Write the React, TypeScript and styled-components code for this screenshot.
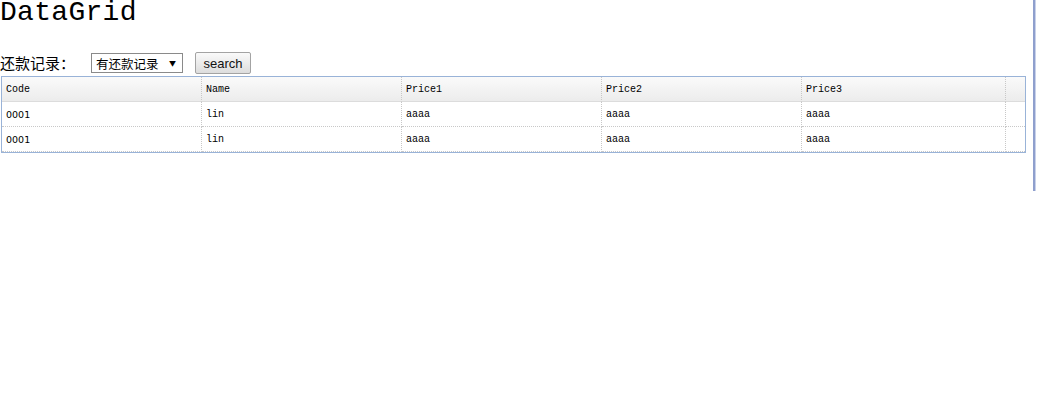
import styled, { createGlobalStyle } from "styled-components";

const GlobalStyle = createGlobalStyle`
  body {
    margin: 0;
    background: #ffffff;
    font-family: "Liberation Sans", "Noto Sans CJK SC", sans-serif;
  }
`;

interface Row {
  code: string;
  name: string;
  price1: string;
  price2: string;
  price3: string;
}

const columns = [
  { key: "code", title: "Code", width: 200 },
  { key: "name", title: "Name", width: 200 },
  { key: "price1", title: "Price1", width: 200 },
  { key: "price2", title: "Price2", width: 200 },
  { key: "price3", title: "Price3", width: 204 },
] as const;

const rows: Row[] = [
  { code: "0001", name: "lin", price1: "aaaa", price2: "aaaa", price3: "aaaa" },
  { code: "0001", name: "lin", price1: "aaaa", price2: "aaaa", price3: "aaaa" },
];

export default function App() {
  return (
    <>
      <GlobalStyle />
      <Page>
        <Title>DataGrid</Title>
        <Toolbar>
          <Label>还款记录：</Label>
          <Dropdown>
            <span>有还款记录</span>
            <Arrow>▼</Arrow>
          </Dropdown>
          <SearchButton>search</SearchButton>
        </Toolbar>
        <Grid>
          <colgroup>
            {columns.map((c) => (
              <col key={c.key} style={{ width: c.width }} />
            ))}
            <col style={{ width: 19 }} />
          </colgroup>
          <thead>
            <tr>
              {columns.map((c) => (
                <HeadCell key={c.key}>{c.title}</HeadCell>
              ))}
              <HeadCell $filler />
            </tr>
          </thead>
          <tbody>
            {rows.map((row, i) => (
              <tr key={i}>
                {columns.map((c) => (
                  <Cell key={c.key} $sans={c.key === "code"}>
                    {row[c.key]}
                  </Cell>
                ))}
                <Cell $filler />
              </tr>
            ))}
          </tbody>
        </Grid>
      </Page>
    </>
  );
}

const Page = styled.div`
  width: 1033px;
  height: 191px;
  border-right: 2px solid #8f9fcd;
  box-shadow: 1px 0 0 #c9d2ea;
`;

const Title = styled.h1`
  margin: 0;
  font-family: "Liberation Mono", "DejaVu Sans Mono", monospace;
  font-size: 28px;
  letter-spacing: 0.3px;
  font-weight: normal;
  line-height: 26px;
  color: #000;
`;

const Toolbar = styled.div`
  display: flex;
  align-items: center;
  height: 22px;
  margin-top: 26px;
`;

const Label = styled.span`
  font-family: "Noto Sans CJK SC", sans-serif;
  font-size: 15px;
  line-height: 20px;
  width: 91px;
  color: #000;
`;

const Dropdown = styled.div`
  box-sizing: border-box;
  width: 92px;
  height: 20px;
  border: 1px solid #8a8a8a;
  display: flex;
  align-items: center;
  justify-content: space-between;
  padding: 0 6px 0 4px;
  font-family: "Noto Sans CJK SC", sans-serif;
  font-size: 12.5px;
  color: #000;
  background: #fff;
`;

const Arrow = styled.span`
  font-size: 7px;
  line-height: 1;
`;

const SearchButton = styled.button`
  box-sizing: border-box;
  margin-left: 12px;
  width: 56px;
  height: 22px;
  padding: 0;
  border: 1px solid #a3a3a3;
  border-radius: 2px;
  background: linear-gradient(#fafafa, #dddddd);
  font-family: "Liberation Sans", sans-serif;
  font-size: 13px;
  color: #111;
`;

const Grid = styled.table`
  margin: 2px 0 0 1px;
  width: 1025px;
  table-layout: fixed;
  border-collapse: separate;
  border-spacing: 0;
  border: 1px solid #99b3d8;
`;

const HeadCell = styled.th<{ $filler?: boolean }>`
  box-sizing: border-box;
  height: 25px;
  padding: 0 0 0 4px;
  text-align: left;
  font-weight: normal;
  font-family: "Liberation Mono", monospace;
  font-size: 10px;
  color: #000;
  background: linear-gradient(#fafafa, #ececec);
  border-bottom: 1px solid #dcdcdc;
  border-right: ${(p) => (p.$filler ? "none" : "1px dotted #c8c8c8")};
`;

const Cell = styled.td<{ $filler?: boolean; $sans?: boolean }>`
  box-sizing: border-box;
  height: 25px;
  padding: 0 0 0 4px;
  font-family: ${(p) => (p.$sans ? '"DejaVu Sans", sans-serif' : '"Liberation Mono", monospace')};
  font-size: ${(p) => (p.$sans ? "9.5px" : "10px")};
  color: #000;
  border-bottom: 1px dotted #c8c8c8;
  border-right: ${(p) => (p.$filler ? "none" : "1px dotted #c8c8c8")};
`;
